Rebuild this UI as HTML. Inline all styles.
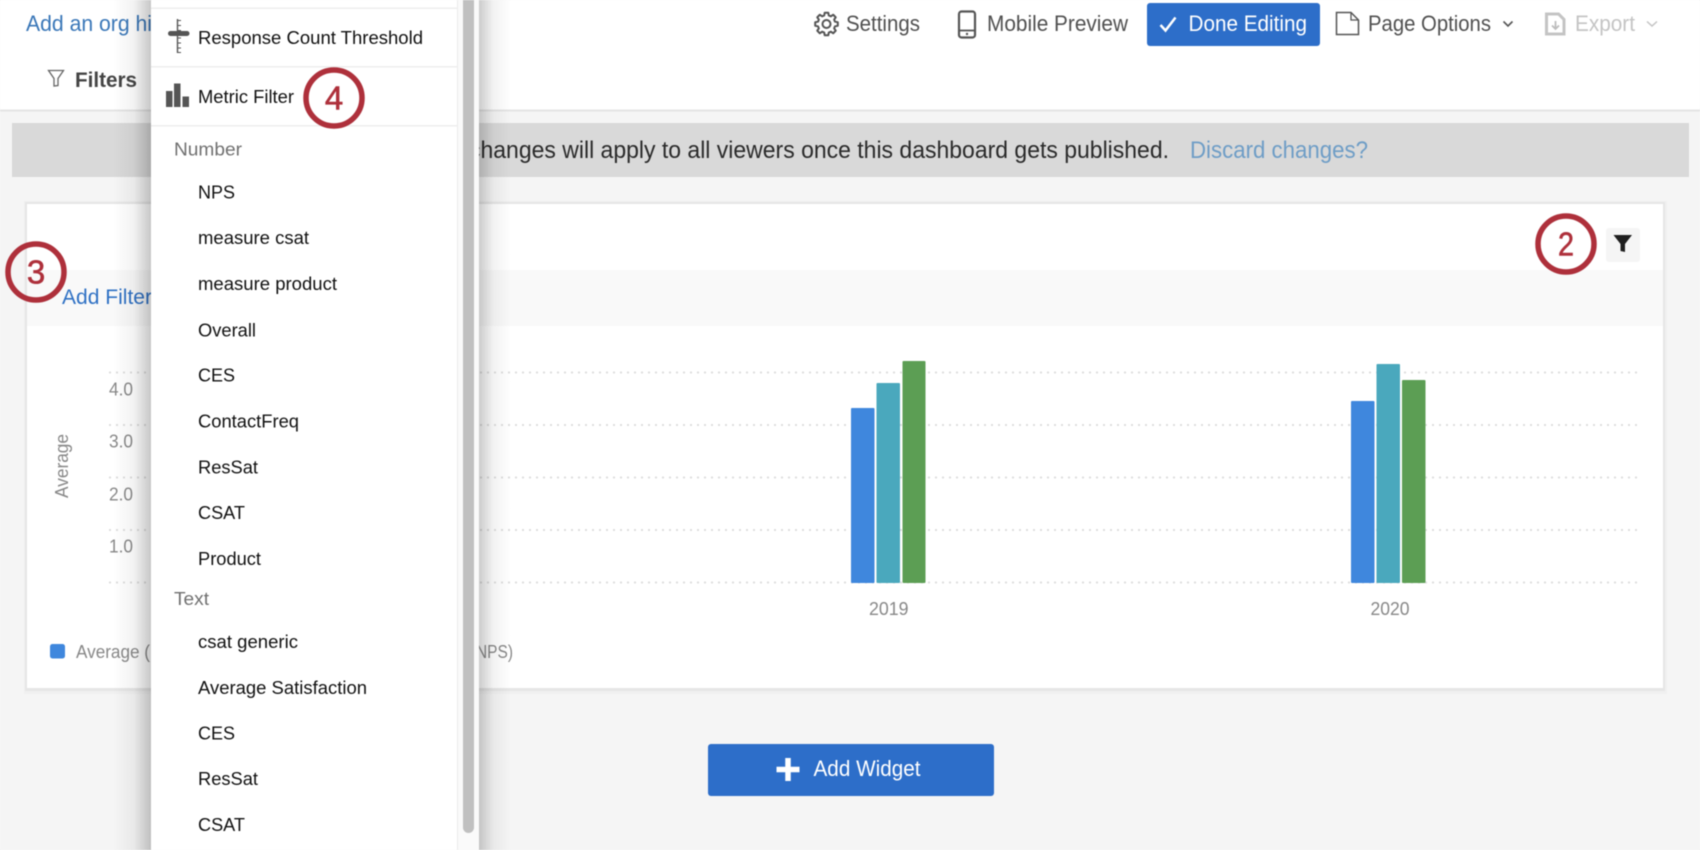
<!DOCTYPE html>
<html>
<head>
<meta charset="utf-8">
<style>
html,body{margin:0;padding:0;width:1700px;height:850px;overflow:hidden;background:#f5f5f5}
svg{display:block;filter:blur(.45px)}
text{font-family:"Liberation Sans",Arial,sans-serif}
.h{font-size:22px;fill:#505050}
.li{font-size:18.5px;fill:#111}
.gr{font-size:18.5px;fill:#707070}
.ax{font-size:18px;fill:#888}
.c{font-size:33px;fill:#ae303b;stroke:#ae303b;stroke-width:.6;text-anchor:middle}
.ring{fill:#fff;stroke:#ae303b;stroke-width:5.500}
</style>
</head>
<body>
<svg width="1700" height="850" viewBox="0 0 1700 850" xmlns="http://www.w3.org/2000/svg">
<defs>
<linearGradient id="sl" x1="0" x2="1" y1="0" y2="0"><stop offset="0" stop-color="#000" stop-opacity="0"/><stop offset=".55" stop-color="#000" stop-opacity=".05"/><stop offset="1" stop-color="#000" stop-opacity=".22"/></linearGradient>
<linearGradient id="sr" x1="0" x2="1" y1="0" y2="0"><stop offset="0" stop-color="#000" stop-opacity=".2"/><stop offset=".45" stop-color="#000" stop-opacity=".05"/><stop offset="1" stop-color="#000" stop-opacity="0"/></linearGradient>
</defs>

<rect width="1700" height="850" fill="#f5f5f5"/>

<!-- header -->
<rect x="0" y="0" width="1700" height="110" fill="#fff"/>
<rect x="0" y="109.500" width="1700" height="2" fill="#e4e4e4"/>
<text x="26" y="31" font-size="22" fill="#3a77b8" textLength="126" lengthAdjust="spacingAndGlyphs">Add an org hi</text>
<path d="M48.500 70.500H63.500L58 78.500V85.500L54 86V78.500Z" fill="none" stroke="#666" stroke-width="1.300"/>
<text x="75" y="87" font-size="21" font-weight="700" fill="#444" textLength="62" lengthAdjust="spacingAndGlyphs">Filters</text>

<polygon transform="translate(826.500 24)" points="-2.3,-8.5 -1.8,-11.3 1.8,-11.3 2.3,-8.5 4.38,-7.64 6.72,-9.26 9.26,-6.72 7.64,-4.38 8.5,-2.3 11.3,-1.8 11.3,1.8 8.5,2.3 7.64,4.38 9.26,6.72 6.72,9.26 4.38,7.64 2.3,8.5 1.8,11.3 -1.8,11.3 -2.3,8.5 -4.38,7.64 -6.72,9.26 -9.26,6.72 -7.64,4.38 -8.5,2.3 -11.3,1.8 -11.3,-1.8 -8.5,-2.3 -7.64,-4.38 -9.26,-6.72 -6.72,-9.26 -4.38,-7.64" fill="none" stroke="#555" stroke-width="2" stroke-linejoin="round"/>
<circle cx="826.500" cy="24" r="4" fill="none" stroke="#555" stroke-width="2"/>
<text class="h" x="846" y="31" textLength="74" lengthAdjust="spacingAndGlyphs">Settings</text>

<rect x="959" y="11.500" width="16" height="26" rx="2.500" fill="none" stroke="#555" stroke-width="2.200"/>
<path d="M960 30.500H974" stroke="#555" stroke-width="1.800"/>
<circle cx="967" cy="34" r="1.200" fill="#555"/>
<text class="h" x="987" y="31" textLength="141" lengthAdjust="spacingAndGlyphs">Mobile Preview</text>

<rect x="1147" y="3" width="173" height="43" rx="3" fill="#2d6ec9"/>
<path d="M1160.500 25L1165.500 30.500L1175.500 17.500" fill="none" stroke="#fff" stroke-width="2.500"/>
<text x="1188.500" y="31" font-size="22" fill="#fff" textLength="118.500" lengthAdjust="spacingAndGlyphs">Done Editing</text>

<path d="M1336.500 12.500H1351L1358.500 20V34.500H1336.500Z" fill="none" stroke="#555" stroke-width="1.500"/>
<path d="M1351 12.500V20H1358.500" fill="none" stroke="#555" stroke-width="1.300"/>
<text class="h" x="1368" y="31" textLength="123" lengthAdjust="spacingAndGlyphs">Page Options</text>
<path d="M1503.500 21.500L1508 26L1512.500 21.500" fill="none" stroke="#555" stroke-width="1.600"/>

<path d="M1546.500 14H1558.500L1564 19.500V34H1546.500Z" fill="none" stroke="#c4c4c4" stroke-width="3"/>
<path d="M1555.500 21V29M1552 25.500L1555.500 29L1559 25.500" fill="none" stroke="#bdbdbd" stroke-width="1.800"/>
<text x="1575" y="31" font-size="22" fill="#c4c4c4" textLength="60" lengthAdjust="spacingAndGlyphs">Export</text>
<path d="M1647 21.500L1652 26L1657 21.500" fill="none" stroke="#c4c4c4" stroke-width="1.500"/>

<!-- banner -->
<rect x="12" y="123" width="1677" height="54" fill="#d9d9d9"/>
<text x="469" y="158" font-size="24" fill="#2a2a2a" textLength="700" lengthAdjust="spacingAndGlyphs">changes will apply to all viewers once this dashboard gets published.</text>
<text x="1190" y="158" font-size="24" fill="#6e9dc6" textLength="178" lengthAdjust="spacingAndGlyphs">Discard changes?</text>

<!-- card -->
<rect x="24" y="201" width="1643" height="493" fill="#f0f0f0"/>
<rect x="25" y="202" width="1640" height="489" fill="#e6e6e6"/>
<rect x="27" y="204" width="1636" height="484" fill="#fff"/>
<rect x="27" y="270" width="1636" height="56" fill="#f9f9f9"/>
<text x="62" y="304" font-size="21" fill="#2f71c4" textLength="90" lengthAdjust="spacingAndGlyphs">Add Filter</text>

<rect x="1606" y="228" width="34" height="34" rx="3" fill="#f5f5f5"/>
<path d="M1613.500 235H1632L1625 244V252L1620.500 251V244Z" fill="#1f1f1f"/>

<!-- chart -->
<g stroke="#dedede" stroke-width="2" stroke-dasharray="2 5">
<path d="M109 372.500H1637"/>
<path d="M109 425H1637"/>
<path d="M109 477.500H1637"/>
<path d="M109 530H1637"/>
<path d="M109 582.500H1637"/>
</g>
<text class="ax" x="109" y="395.500" textLength="24" lengthAdjust="spacingAndGlyphs">4.0</text>
<text class="ax" x="109" y="447.500" textLength="24" lengthAdjust="spacingAndGlyphs">3.0</text>
<text class="ax" x="109" y="500.500" textLength="24" lengthAdjust="spacingAndGlyphs">2.0</text>
<text class="ax" x="109" y="552.500" textLength="24" lengthAdjust="spacingAndGlyphs">1.0</text>
<text class="ax" transform="translate(68 498) rotate(-90)" textLength="64" lengthAdjust="spacingAndGlyphs">Average</text>
<rect x="851" y="408" width="23.500" height="175" rx="1" fill="#3f87dd"/>
<rect x="876.500" y="383" width="23.500" height="200" rx="1" fill="#4aa8bd"/>
<rect x="902.500" y="361" width="23" height="222" rx="1" fill="#5c9e54"/>
<rect x="1351" y="401" width="23.500" height="182" rx="1" fill="#3f87dd"/>
<rect x="1376.500" y="364" width="23.500" height="219" rx="1" fill="#4aa8bd"/>
<rect x="1402" y="380" width="23.500" height="203" rx="1" fill="#5c9e54"/>
<text class="ax" x="869" y="615" textLength="39.500" lengthAdjust="spacingAndGlyphs">2019</text>
<text class="ax" x="1370.500" y="615" textLength="39" lengthAdjust="spacingAndGlyphs">2020</text>

<rect x="50" y="644" width="15" height="14.500" rx="2.500" fill="#3f87dd"/>
<text class="ax" x="76" y="658" textLength="74" lengthAdjust="spacingAndGlyphs">Average (</text>
<text class="ax" x="476" y="658" textLength="37" lengthAdjust="spacingAndGlyphs">NPS)</text>

<!-- add widget -->
<rect x="708" y="744" width="286" height="52" rx="3" fill="#2d6ec9"/>
<path d="M788 758V781M776.500 769.500H799.500" stroke="#fff" stroke-width="5.500" stroke-linecap="butt"/>
<text x="813.500" y="776" font-size="22" fill="#fff" textLength="107" lengthAdjust="spacingAndGlyphs">Add Widget</text>

<!-- dropdown shadow -->
<rect x="113" y="0" width="38" height="850" fill="url(#sl)"/>
<rect x="479" y="0" width="32" height="850" fill="url(#sr)"/>

<!-- dropdown -->
<rect x="151" y="0" width="306" height="850" fill="#fff"/>
<rect x="457" y="0" width="22" height="850" fill="#fafafa"/>
<rect x="457" y="0" width="1" height="850" fill="#ececec"/>
<rect x="463" y="-20" width="11" height="853" rx="5.500" fill="#c0c0c0"/>
<rect x="151" y="7.500" width="306" height="1.500" fill="#eeeeee"/>
<rect x="151" y="66" width="306" height="1.500" fill="#eeeeee"/>
<rect x="151" y="125" width="306" height="1.500" fill="#eeeeee"/>

<path d="M177.500 19V53" stroke="#555" stroke-width="1.400"/>
<path d="M177.500 20.500H181M177.500 25.500H181M177.500 30.500H181M177.500 38H181M177.500 43H181M177.500 48H181M177.500 52.500H181" stroke="#555" stroke-width="1.100"/>
<path d="M170.500 33.500H187" stroke="#555" stroke-width="5" stroke-linecap="round"/>
<text class="li" x="198" y="44" textLength="225" lengthAdjust="spacingAndGlyphs">Response Count Threshold</text>

<rect x="166" y="91" width="6.500" height="16" fill="#555"/>
<rect x="174" y="83.500" width="6.500" height="23.500" fill="#555"/>
<rect x="182.500" y="96.500" width="6.500" height="10.500" fill="#555"/>
<text class="li" x="198" y="103" textLength="96" lengthAdjust="spacingAndGlyphs">Metric Filter</text>

<text class="gr" x="174" y="155.500" textLength="68" lengthAdjust="spacingAndGlyphs">Number</text>
<text class="li" x="198" y="198.500" textLength="37" lengthAdjust="spacingAndGlyphs">NPS</text>
<text class="li" x="198" y="244" textLength="111" lengthAdjust="spacingAndGlyphs">measure csat</text>
<text class="li" x="198" y="290" textLength="139" lengthAdjust="spacingAndGlyphs">measure product</text>
<text class="li" x="198" y="336.500" textLength="58" lengthAdjust="spacingAndGlyphs">Overall</text>
<text class="li" x="198" y="381.500" textLength="37" lengthAdjust="spacingAndGlyphs">CES</text>
<text class="li" x="198" y="427.500" textLength="101" lengthAdjust="spacingAndGlyphs">ContactFreq</text>
<text class="li" x="198" y="473.500" textLength="60" lengthAdjust="spacingAndGlyphs">ResSat</text>
<text class="li" x="198" y="519" textLength="47" lengthAdjust="spacingAndGlyphs">CSAT</text>
<text class="li" x="198" y="565" textLength="63" lengthAdjust="spacingAndGlyphs">Product</text>
<text class="gr" x="174" y="605" textLength="35" lengthAdjust="spacingAndGlyphs">Text</text>
<text class="li" x="198" y="648" textLength="100" lengthAdjust="spacingAndGlyphs">csat generic</text>
<text class="li" x="198" y="694" textLength="169" lengthAdjust="spacingAndGlyphs">Average Satisfaction</text>
<text class="li" x="198" y="739.500" textLength="37" lengthAdjust="spacingAndGlyphs">CES</text>
<text class="li" x="198" y="785" textLength="60" lengthAdjust="spacingAndGlyphs">ResSat</text>
<text class="li" x="198" y="831" textLength="47" lengthAdjust="spacingAndGlyphs">CSAT</text>

<!-- callouts -->
<circle class="ring" cx="1566" cy="244" r="28"/>
<text class="c" x="1566" y="255.500" textLength="16" lengthAdjust="spacingAndGlyphs">2</text>
<circle class="ring" cx="36" cy="272" r="28" style="fill:none"/>
<text class="c" x="36" y="283.500">3</text>
<circle class="ring" cx="334" cy="98" r="28"/>
<text class="c" x="334" y="109.500">4</text>
</svg>
</body>
</html>
